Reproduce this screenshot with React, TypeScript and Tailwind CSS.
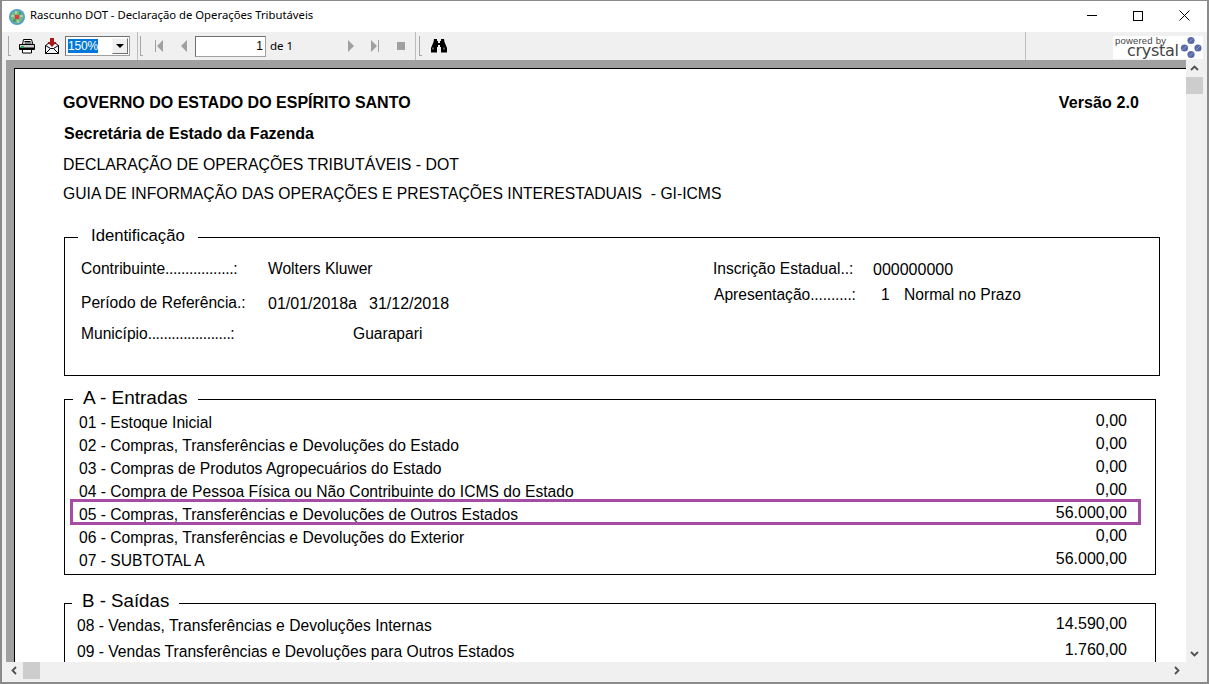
import React from "react";

const font = { fontFamily: '"Liberation Sans", Arial, sans-serif' };

function Legend({ children, className }: { children: React.ReactNode; className: string }) {
  return <div className={`absolute bg-white whitespace-nowrap ${className}`}>{children}</div>;
}

function Row({ label, value, h = "h-[23px]", pl = "pl-[14px]" }: { label: string; value: string; h?: string; pl?: string }) {
  return (
    <div className={`flex justify-between items-center ${h} ${pl} pr-[28px] leading-[23px] text-black whitespace-nowrap`}>
      <span className="text-[15.650px]">{label}</span>
      <span className="text-[16px] -translate-y-[2px]">{value}</span>
    </div>
  );
}

function Sep() {
  return <div className="w-[3px] h-[20px] border-l border-b border-[#a8a8a8]" />;
}

function Printer() {
  return (
    <svg width="16" height="15" viewBox="0 0 16 15" className="block">
      <path d="M4.500 .5h8l1.500 5H3.500z" fill="#fff" stroke="#000" />
      <path d="M5.500 2.500h6M5.500 4h7" stroke="#000" />
      <path d="M.5 5.500h15v5H.5z" fill="#d0d0d0" stroke="#000" />
      <path d="M1 9.500h14" stroke="#000" strokeWidth="2" />
      <rect x="2" y="7" width="3" height="2" fill="#18a848" />
      <path d="M3.500 10.500h9v3.500h-9z" fill="#fff" stroke="#000" />
    </svg>
  );
}

function Mail() {
  return (
    <svg width="14" height="16" viewBox="0 0 14 16" className="block">
      <path d="M.5 7.500L4 5h6l3.500 2.500v8H.5z" fill="#eef6fb" stroke="#000" />
      <path d="M.5 15.500L5.500 10.500h3l5 5M.5 7.500L5.500 10.500M13.500 7.500L8.500 10.500" fill="none" stroke="#000" />
      <path d="M5 0h4v4h2.500L7 9 2.500 4H5z" fill="#b01818" />
    </svg>
  );
}

function Binoculars() {
  return (
    <svg width="16" height="14" viewBox="0 0 16 14" className="block">
      <path d="M3 0h3v2h1v2h2V2h1V0h3l.5 3 2.500 6v4.500h-6V8H9V6H7v2H6v5.500H0V9l2.500-6z" fill="#000" />
      <path d="M2 8.500v2M13 8.500v2" stroke="#b0b0b0" />
    </svg>
  );
}

function Nav({ d }: { d: string }) {
  return (
    <svg width="10" height="14" viewBox="0 0 10 14" className="block">
      <path d={d} fill="#a0a0a0" />
    </svg>
  );
}

function Dot({ cx, cy }: { cx: number; cy: number }) {
  return (
    <g>
      <circle cx={cx} cy={cy} r="3.600" fill="#5a6aa8" />
      <path d={`M${cx - 2} ${cy + 2}L${cx + 2} ${cy - 2}`} stroke="#8c96c4" strokeWidth="1" />
    </g>
  );
}

function CrystalLogo() {
  return (
    <div className="relative w-[90px] h-[23px] bg-white overflow-hidden">
      <span className="absolute left-[2px] top-[2px] text-[9.500px] leading-[5px] tracking-[0.2px] text-[#444] whitespace-nowrap">powered by</span>
      <span className="absolute left-[14px] top-[8px] text-[16px] leading-[13px] tracking-[-0.3px] text-[#444]" style={{ fontFamily: '"DejaVu Sans", sans-serif' }}>crystal</span>
      <svg width="24" height="23" viewBox="0 0 24 23" className="absolute left-[67px] top-0">
        <Dot cx={11} cy={4.500} />
        <Dot cx={4.500} cy={12} />
        <Dot cx={18} cy={12} />
        <Dot cx={11} cy={18.500} />
      </svg>
    </div>
  );
}

function AppIcon() {
  return (
    <svg width="16" height="16" viewBox="0 0 16 16" className="block ml-[7px] mr-[5px]">
      <circle cx="8" cy="8" r="8" fill="#4f9ccf" />
      <circle cx="8" cy="8" r="6.300" fill="#74b77d" />
      <path d="M2 6h3v2H2zM11 6h3v2h-3zM6 2h2v3H6zM8 11h2v3H8z" fill="#a8d0a0" />
      <path d="M4 10h3v3H4zM10 3h2v3h-2z" fill="#4d9a62" />
      <rect x="6" y="6" width="4" height="4" fill="#e8353f" />
    </svg>
  );
}

export default function App() {
  return (
    <div className="w-[1209px] h-[684px] overflow-hidden flex flex-col bg-white border-t border-x-2 border-b-2 border-[#8a8a8a]" style={font}>
      {/* title bar */}
      <div className="h-[31px] flex items-center bg-white shrink-0">
        <AppIcon />
        <span className="text-[11.300px] text-black -translate-y-px" style={{ fontFamily: '"Noto Sans", sans-serif' }}>Rascunho DOT - Declaração de Operações Tributáveis</span>
        <div className="ml-auto flex items-center -translate-y-px">
          <div className="w-[46px] h-[31px] flex items-center justify-center">
            <div className="w-[10px] h-px bg-black" />
          </div>
          <div className="w-[46px] h-[31px] flex items-center justify-center">
            <div className="w-[10px] h-[10px] border border-black" />
          </div>
          <div className="w-[46px] h-[31px] flex items-center justify-center">
            <svg width="11" height="11" viewBox="0 0 11 11"><path d="M.5.500l10 10M10.500.500l-10 10" stroke="#000" /></svg>
          </div>
        </div>
      </div>

      {/* toolbar */}
      <div className="h-[28px] bg-[#f0f0f0] flex items-center shrink-0 pl-[6px]">
        <Sep />
        <div className="ml-[8px] mr-[10px]"><Printer /></div>
        <div className="mr-[6px]"><Mail /></div>
        <div className="w-[65px] h-[20px] flex items-center bg-white border border-[#a0a0a0] border-t-[#707070] border-l-[#707070] pl-[2px] pr-px">
          <span className="bg-[#0078d7] text-white text-[12px] leading-[14px] tracking-[-0.2px]">150%</span>
          <div className="ml-auto w-[16px] h-[16px] bg-[#f0f0f0] border border-[#f8f8f8] border-r-[#707070] border-b-[#707070] flex items-center justify-center">
            <div className="w-0 h-0 border-x-[4px] border-x-transparent border-t-[4px] border-t-black" />
          </div>
        </div>
        <div className="w-px h-[28px] bg-[#bdbdbd] ml-[7px] mr-[2px]" />
        <Sep />
        <div className="ml-[12px] mr-[15px]"><Nav d="M0 1h1v12H0zM8 1v12L2 7z" /></div>
        <div className="mr-[5px]"><Nav d="M7 1v12L1 7z" /></div>
        <div className="w-[71px] h-[21px] bg-white border border-[#a0a0a0] border-t-[#707070] border-l-[#707070] text-right text-[12px] leading-[19px] pr-[2px] text-black">1</div>
        <span className="text-[11.500px] text-black ml-[4px] w-[76px]" style={{ fontFamily: '"Noto Sans", sans-serif' }}>de 1</span>
        <div className="mr-[14px]"><Nav d="M2 1v12l6-6z" /></div>
        <div className="mr-[17px]"><Nav d="M1 1v12l6-6zM8 1h1v12H8z" /></div>
        <div className="w-[8px] h-[8px] bg-[#a0a0a0] mr-[10px]" />
        <div className="w-px h-[28px] bg-[#bdbdbd] mr-[3px]" />
        <Sep />
        <div className="ml-[9px]"><Binoculars /></div>
        <div className="w-px h-[28px] bg-[#bdbdbd] ml-[578px]" />
        <div className="ml-auto mr-[4px] mt-[3px]"><CrystalLogo /></div>
      </div>

      {/* body */}
      <div className="flex-1 min-h-0 flex flex-col pl-[4px] pr-[4px] pb-[3px] bg-[#f0f0f0]">
        <div className="flex-1 min-h-0 flex">
          <div className="flex-1 min-w-0 bg-[#a0a0a0] pl-[8px] pt-[8px] overflow-hidden">
            <div className="bg-white border-l border-t border-black h-[700px] text-black pt-[25px]">
              <div className="flex justify-between pl-[48px] pr-[47px] h-[31px] text-[16px] font-bold leading-[18px] whitespace-nowrap">
                <span>GOVERNO DO ESTADO DO ESPÍRITO SANTO</span>
                <span className="tracking-[0.1px]">Versão 2.0</span>
              </div>
              <div className="pl-[49px] h-[31px] text-[16px] font-bold leading-[18px]">Secretária de Estado da Fazenda</div>
              <div className="pl-[48px] h-[29px] text-[15.850px] leading-[18px]">DECLARAÇÃO DE OPERAÇÕES TRIBUTÁVEIS - DOT</div>
              <div className="pl-[48px] h-[52px] text-[15.700px] leading-[18px] whitespace-pre">GUIA DE INFORMAÇÃO DAS OPERAÇÕES E PRESTAÇÕES INTERESTADUAIS  - GI-ICMS</div>

              <div className="relative ml-[49px] w-[1096px] h-[139px] border border-black text-[15.600px] leading-[18px]">
                <Legend className="left-[13px] -top-[12px] px-[13px] h-[20px] leading-[20px] text-[16.700px]">Identificação</Legend>
                <div className="grid grid-cols-[632px_1fr] pt-[22px] pl-[16px]">
                  <div>
                    <div className="flex h-[34px]">
                      <span className="w-[187px]">Contribuinte<span className="tracking-[-0.33px]">.................:</span></span>
                      <span>Wolters Kluwer</span>
                    </div>
                    <div className="flex h-[31px]">
                      <span className="w-[187px]">Período de Referência.:</span>
                      <span className="pt-[1px] text-[16px] flex whitespace-nowrap"><span>01/01/2018a</span><span className="ml-[12px]">31/12/2018</span></span>
                    </div>
                    <div className="flex">
                      <span className="w-[272px]">Município<span className="tracking-[-0.4px]">.....................:</span></span>
                      <span>Guarapari</span>
                    </div>
                  </div>
                  <div>
                    <div className="flex h-[26px]">
                      <span className="w-[160px]">Inscrição Estadual..:</span>
                      <span className="pt-[1px] text-[16px]">000000000</span>
                    </div>
                    <div className="flex pl-px">
                      <span className="w-[167px]">Apresentação<span className="tracking-[-0.2px]">..........:</span></span>
                      <span className="w-[23px]">1</span>
                      <span>Normal no Prazo</span>
                    </div>
                  </div>
                </div>
              </div>

              <div className="relative ml-[49px] mt-[23px] w-[1092px] h-[176px] border border-black">
                <Legend className="left-[8px] -top-[13px] px-[10px] text-[19px] leading-[21px]">A - Entradas</Legend>
                <div className="pt-[11px]">
                  <Row label="01 - Estoque Inicial" value="0,00" />
                  <Row label="02 - Compras, Transferências e Devoluções do Estado" value="0,00" />
                  <Row label="03 - Compras de Produtos Agropecuários do Estado" value="0,00" />
                  <Row label="04 - Compra de Pessoa Física ou Não Contribuinte do ICMS do Estado" value="0,00" />
                  <Row label="05 - Compras, Transferências e Devoluções de Outros Estados" value="56.000,00" />
                  <Row label="06 - Compras, Transferências e Devoluções do Exterior" value="0,00" />
                  <Row label="07 - SUBTOTAL A" value="56.000,00" />
                </div>
                <div className="absolute left-[5px] top-[99px] w-[1071px] h-[26px] border-[3px] border-[#a54ca5]" />
              </div>

              <div className="relative ml-[49px] mt-[28px] w-[1092px] h-[100px] border border-black">
                <Legend className="left-[7px] -top-[14px] px-[10px] text-[18.700px] leading-[21px]">B - Saídas</Legend>
                <div className="pt-[8px]">
                  <Row pl="pl-[12px]" h="h-[26px]" label="08 - Vendas, Transferências e Devoluções Internas" value="14.590,00" />
                  <Row pl="pl-[12px]" h="h-[26px]" label="09 - Vendas Transferências e Devoluções para Outros Estados" value="1.760,00" />
                </div>
              </div>
            </div>
          </div>

          {/* vertical scrollbar */}
          <div className="w-[17px] bg-[#f0f0f0] flex flex-col items-center shrink-0">
            <div className="h-[17px] flex items-center justify-center">
              <svg width="9" height="7" viewBox="0 0 9 7"><path d="M1 5l3.500-3.500L8 5" fill="none" stroke="#505050" strokeWidth="1.800" /></svg>
            </div>
            <div className="w-full h-[17px] bg-[#cdcdcd]" />
            <div className="mt-auto h-[17px] flex items-center justify-center">
              <svg width="9" height="7" viewBox="0 0 9 7"><path d="M1 2l3.500 3.500L8 2" fill="none" stroke="#505050" strokeWidth="1.800" /></svg>
            </div>
          </div>
        </div>

        {/* horizontal scrollbar */}
        <div className="h-[17px] flex items-center shrink-0">
          <div className="w-[17px] flex items-center justify-center">
            <svg width="7" height="9" viewBox="0 0 7 9"><path d="M5 1L1.500 4.500 5 8" fill="none" stroke="#505050" strokeWidth="1.800" /></svg>
          </div>
          <div className="w-[17px] h-full bg-[#cdcdcd]" />
          <div className="ml-auto w-[33px] flex items-center justify-start pl-[3px]">
            <svg width="7" height="9" viewBox="0 0 7 9"><path d="M2 1l3.500 3.500L2 8" fill="none" stroke="#505050" strokeWidth="1.800" /></svg>
          </div>
        </div>
      </div>
    </div>
  );
}
